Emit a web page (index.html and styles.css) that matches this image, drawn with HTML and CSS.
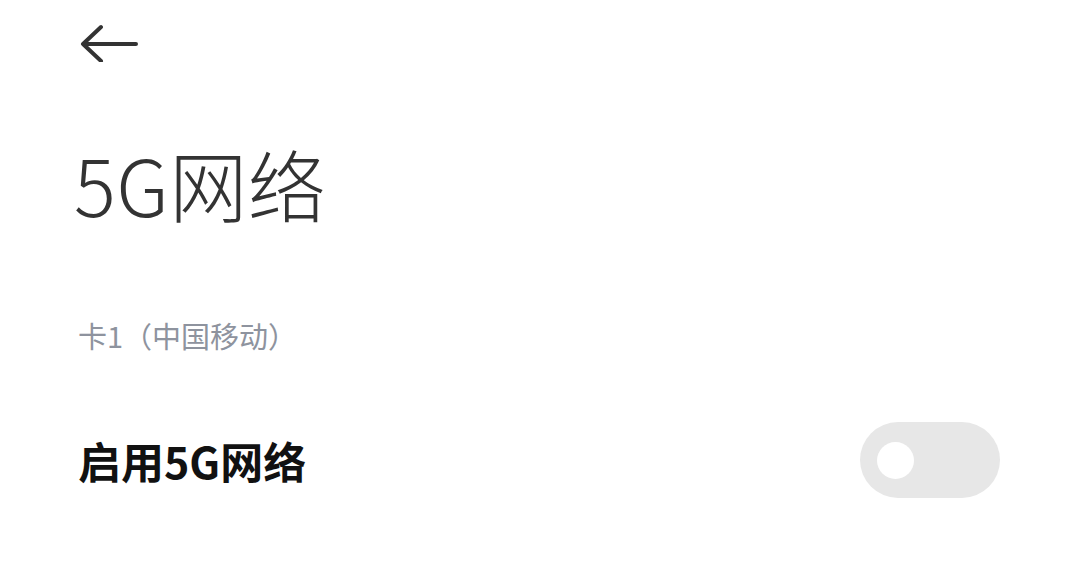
FILE: index.html
```html
<!DOCTYPE html>
<html lang="zh-CN">
<head>
<meta charset="utf-8">
<link rel="stylesheet" href="styles.css">
</head>
<body>
<div class="page">
  <div class="topbar">
    <svg class="back" width="60" height="40" viewBox="0 0 60 40">
      <path d="M21 5 L3 22 L21 39 M3 22 H56" fill="none" stroke="#333" stroke-width="4" stroke-linecap="round" stroke-linejoin="round"/>
    </svg>
  </div>
  <h1 class="title">5G网络</h1>
  <div class="section-label">卡1（中国移动）</div>
  <div class="row">
    <div class="row-label">启用5G网络</div>
    <div class="switch"><div class="knob"></div></div>
  </div>
</div>
</body>
</html>
```
FILE: styles.css
```css
html, body {
  margin: 0;
  padding: 0;
  background: #ffffff;
}
.page {
  width: 1080px;
  height: 588px;
  font-family: "Noto Sans CJK SC", "Noto Sans", sans-serif;
  overflow: hidden;
}
.topbar {
  padding: 20px 0 0 80px;
  height: 44px;
  display: flex;
  align-items: center;
}
.back {
  display: block;
}
.title {
  margin: 64px 0 0 74px;
  font-size: 78px;
  font-weight: 300;
  color: #333333;
  line-height: 110px;
  height: 110px;
  letter-spacing: 0.5px;
}
.section-label {
  margin: 77px 0 0 78px;
  font-size: 29px;
  color: #8e939e;
  line-height: 40px;
}
.row {
  margin: 67px 0 0 78px;
  width: 922px;
  display: flex;
  align-items: center;
  justify-content: space-between;
}
.row-label {
  font-size: 43px;
  font-weight: 700;
  color: #111111;
  line-height: 76px;
}
.switch {
  width: 140px;
  height: 76px;
  border-radius: 38px;
  background: #e7e7e7;
  display: flex;
  align-items: center;
  padding-left: 17px;
  box-sizing: border-box;
}
.knob {
  width: 37px;
  height: 37px;
  border-radius: 50%;
  background: #ffffff;
}
```
